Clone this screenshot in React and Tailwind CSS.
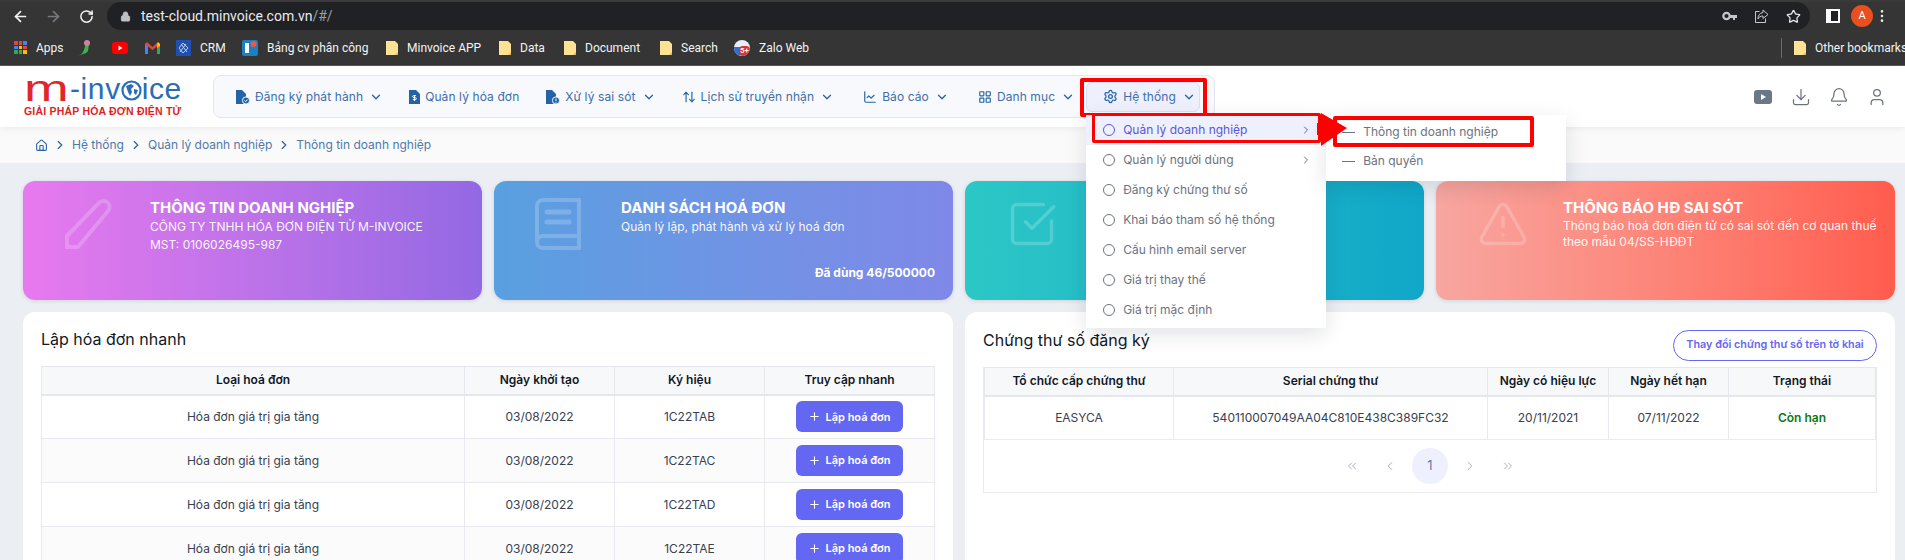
import {
  ArrowLeft,
  ArrowRight,
  ArrowUpDown,
  Bell,
  ChartLine,
  ChevronDown,
  ChevronLeft,
  ChevronRight,
  ChevronsLeft,
  ChevronsRight,
  Download,
  EllipsisVertical,
  House,
  LayoutGrid,
  Lock,
  Plus,
  RotateCw,
  Settings,
  SquareCheckBig,
  Star,
  TriangleAlert,
  User,
} from "lucide-react";

const DocIcon = ({ badge }) => (
  <svg width={badge === "dollar" ? 11 : 15} height="16" viewBox={badge === "dollar" ? "0 0 11 16" : "0 0 15 16"} className="shrink-0">
    <path d={badge === "dollar" ? "M0 1h7l4 4v10H0z" : "M1 1h6l4 4v10H1z"} fill="#2563a8" />
    {badge === "check" && <circle cx="11" cy="11.5" r="3.6" fill="#2563a8" stroke="#f8f9fc" />}
    {badge === "check" && <path d="M9.4 11.5l1.2 1.2 2-2.2" stroke="#fff" fill="none" />}
    {badge === "info" && <circle cx="11" cy="11.5" r="3.6" fill="#2563a8" stroke="#f8f9fc" />}
    {badge === "info" && <path d="M11 9.6v2.4M11 12.8v.9" stroke="#fff" fill="none" />}
    {badge === "dollar" && <path d="M5.500 6v6M3.900 10.600h2.400a1 1 0 000-2H4.700a1 1 0 010-2h2.200" stroke="#fff" fill="none" />}
  </svg>
);

const Folder = () => (
  <svg width="12" height="14" viewBox="0 0 12 14" className="shrink-0">
    <path d="M0 0h9l3 3v11H0z" fill="#fde293" />
    <path d="M9 14l3-3v3z" fill="#e9b949" />
  </svg>
);

function Bookmark({ icon, label, className = "" }) {
  return (
    <div className={`flex shrink-0 items-center gap-[9px] whitespace-nowrap ${className}`}>
      {icon}
      {label && <span>{label}</span>}
    </div>
  );
}

function ChromeBar() {
  return (
    <div className="bg-[#353535] font-['Roboto',sans-serif] text-white">
      <div className="flex h-[30px] items-end border-t-2 border-[#3a3a3a]">
        <div className="flex h-[28px] w-[107px] items-center pl-[12px]">
          <ArrowLeft size={17} strokeWidth={2.4} className="text-[#f1f3f4]" />
          <ArrowRight size={17} strokeWidth={2.4} className="ml-[16px] text-[#77797c]" />
          <RotateCw size={15} strokeWidth={2.4} className="ml-[17px] text-[#f1f3f4]" />
        </div>
        <div className="flex h-[28px] w-[1703px] items-center rounded-full bg-[#202124] pl-[13px] pr-[9px]">
          <Lock size={11} className="fill-[#bdc1c6] text-[#bdc1c6]" />
          <span className="ml-[10px] text-[14px] text-[#e8eaed]">
            test-cloud.minvoice.com.vn<span className="text-[#9aa0a6]">/#/</span>
          </span>
          <svg width="15" height="10" viewBox="0 0 15 10" className="ml-auto">
            <circle cx="4.500" cy="5" r="3.200" fill="none" stroke="#c4c7ca" strokeWidth="2.200" />
            <path d="M7 4h8v3h-2v2h-2V7H7z" fill="#c4c7ca" />
          </svg>
          <svg width="15" height="15" viewBox="0 0 15 15" fill="none" stroke="#c4c7ca" className="ml-[17px]">
            <path d="M5.500 2.500H1.500v11h10v-4" />
            <path d="M9 1l5 4.500L9 9.500V7C6.500 7 5 8 4 10c0-3.500 1.500-6 5-6.500z" />
          </svg>
          <Star size={15} className="ml-[17px] text-[#e8eaed]" />
        </div>
        <div className="flex h-[28px] flex-1 items-center pl-[16px]">
          <div className="h-[14px] w-[14px] shrink-0 border-2 border-white border-l-[5px] bg-[#202124]" />
          <div className="ml-[11px] flex h-[22px] w-[22px] shrink-0 items-center justify-center rounded-full bg-[#e8501e] text-[11px]">A</div>
          <EllipsisVertical size={16} className="ml-[1px] shrink-0 text-[#e8eaed]" />
        </div>
      </div>
      <div className="flex h-[36px] items-center overflow-hidden border-b border-[#5a5a5a] pl-[14px] text-[12px] text-[#f1f3f4]">
        <Bookmark
          label="Apps"
          className="w-[50px]"
          icon={
            <span className="grid h-[13px] w-[13px] shrink-0 grid-cols-3 gap-[1px]">
              {["bg-[#ea4335]", "bg-[#ea4335]", "bg-[#4285f4]", "bg-[#4285f4]", "bg-[#fbbc04]", "bg-[#ea4335]", "bg-[#34a853]", "bg-[#34a853]", "bg-[#fbbc04]"].map((c, i) => (
                <span key={i} className={c} />
              ))}
            </span>
          }
        />
        <svg width="16" height="18" viewBox="0 0 16 18" className="ml-[13px] shrink-0">
          <path d="M1 17c3-1 5-3 6-6l2-7 3 1-1 7c-1 2-4 3-5 3z" fill="#3cb64a" />
          <circle cx="10" cy="4" r="3" fill="#c9869b" />
        </svg>
        <svg width="16" height="12" viewBox="0 0 16 12" className="ml-[19px] shrink-0">
          <rect width="16" height="12" rx="3" fill="#f00" />
          <path d="M6.500 3.500l4 2.500-4 2.500z" fill="#fff" />
        </svg>
        <svg width="15" height="12" viewBox="0 0 15 12" className="ml-[17px] shrink-0">
          <path d="M0 12V1.500L3 2v10z" fill="#4285f4" />
          <path d="M12 12V2l3-.5V12z" fill="#34a853" />
          <path d="M0 2l2-2 5.500 5L13 0l2 2-7.500 6z" fill="#ea4335" />
          <path d="M13 0l2 2v2l-3 2V2z" fill="#fbbc04" />
        </svg>
        <Bookmark
          className="ml-[16px] w-[49px]"
          label="CRM"
          icon={
            <svg width="15" height="16" viewBox="0 0 15 16" className="shrink-0">
              <rect width="15" height="16" fill="#1f4fb0" />
              <path d="M3 8l4-5 5 5-5 5zM5 4l6 8M10 4l-6 8" stroke="#b9d0f5" fill="none" />
            </svg>
          }
        />
        <Bookmark
          className="ml-[17px] w-[125px]"
          label="Bảng cv phân công"
          icon={
            <svg width="16" height="16" viewBox="0 0 16 16" className="shrink-0">
              <rect width="16" height="16" rx="2" fill="#1b7fc4" />
              <rect x="3" y="3" width="4" height="10" fill="#fff" />
              <circle cx="11.500" cy="4" r="3" fill="#ea5a47" />
            </svg>
          }
        />
        <Bookmark className="ml-[19px] w-[94px]" label="Minvoice APP" icon={<Folder />} />
        <Bookmark className="ml-[19px] w-[46px]" label="Data" icon={<Folder />} />
        <Bookmark className="ml-[19px] w-[76px]" label="Document" icon={<Folder />} />
        <Bookmark className="ml-[20px] w-[57px]" label="Search" icon={<Folder />} />
        <Bookmark
          className="ml-[17px]"
          label="Zalo Web"
          icon={
            <span className="relative h-[16px] w-[16px] shrink-0 overflow-hidden rounded-full bg-[#e8eef8]">
              <span className="absolute bottom-0 left-0 h-[9px] w-[6px] bg-[#2f6fd0]" />
              <span className="absolute bottom-0 right-0 flex h-[10px] w-[11px] items-center justify-center rounded-sm bg-[#d9342b] text-[8px] font-bold leading-none">5+</span>
            </span>
          }
        />
        <div className="ml-auto h-[20px] w-px shrink-0 bg-[#6b6b6b]" />
        <Bookmark className="ml-[12px] w-[111px]" label="Other bookmarks" icon={<Folder />} />
      </div>
    </div>
  );
}

function Logo() {
  return (
    <div className="w-[213px] pl-[24px] font-['Liberation_Sans',sans-serif]">
      <div className="flex h-[26px] items-end leading-none">
        <span className="inline-block w-[46px] origin-left scale-x-[1.45] text-[37px] leading-[26px] text-[#e0262b]">m</span>
        <span className="text-[30px] leading-[26px] tracking-[0.6px] text-[#2a6db5]">-inv</span>
        <svg width="21" height="21" viewBox="0 0 21 21" className="mb-[1px] shrink-0">
          <circle cx="10.500" cy="10.500" r="9" fill="#fff" stroke="#2a6db5" strokeWidth="2.200" />
          <path d="M5 6l5-2 3 2-3 3 1 3-2 4-2-4zM13 9l4 1-2 5-2-2z" fill="#2a6db5" />
        </svg>
        <span className="text-[30px] leading-[26px] tracking-[0.6px] text-[#2a6db5]">ice</span>
      </div>
      <div className="mt-[3px] whitespace-nowrap text-[10.500px] font-bold leading-[12px] tracking-[0.2px] text-[#dd1f26]">GIẢI PHÁP HÓA ĐƠN ĐIỆN TỬ</div>
    </div>
  );
}

const subItems = ["Thông tin doanh nghiệp", "Bản quyền"];
const menuItems = [
  "Quản lý doanh nghiệp",
  "Quản lý người dùng",
  "Đăng ký chứng thư số",
  "Khai báo tham số hệ thống",
  "Cấu hình email server",
  "Giá trị thay thế",
  "Giá trị mặc định",
];

function SystemMenu() {
  return (
    <div className="absolute left-[-1px] top-[32px] z-20 w-[240px] bg-white pb-[3px] shadow-[0_6px_20px_rgba(15,23,42,0.12)]">
      {menuItems.map((item, i) => (
        <div
          key={item}
          className={`flex h-[30px] items-center pl-[17px] pr-[14px] text-[12px] tracking-normal ${i === 0 ? "bg-[#eef1fd] text-[#5a55d6]" : "text-[#6b7280]"}`}
        >
          <span className={`h-[12px] w-[12px] shrink-0 rounded-full border ${i === 0 ? "border-[#5a55d6]" : "border-[#6b7280]"}`} />
          <span className="ml-[8px]">{item}</span>
          {i < 2 && <ChevronRight size={12} className="ml-auto" />}
        </div>
      ))}
      <div className="absolute left-full top-0 h-[66px] w-[240px] bg-white pt-[3px] shadow-[0_6px_20px_rgba(15,23,42,0.12)]">
        {subItems.map((item) => (
          <div key={item} className="flex h-[29px] items-center pl-[16px] text-[12px] tracking-normal text-[#6b7280]">
            <span className="h-px w-[13px] bg-[#6b7280]" />
            <span className="ml-[8px]">{item}</span>
          </div>
        ))}
      </div>

      {/* red marks drawn on the screenshot */}
      <div className="absolute left-[6px] top-[-2px] h-[30px] w-[229px] rounded-[2px] border-[3px] border-[#f00]" />
      <div className="absolute left-[247px] top-[1px] h-[31px] w-[201px] rounded-[2px] border-[4px] border-[#f00]" />
      <svg width="30" height="36" viewBox="0 0 30 36" className="absolute left-[231px] top-[-2px]">
        <path d="M4 0L30 15 4 33V22H0V10h4z" fill="#f00" />
      </svg>
    </div>
  );
}

const navItems = [
  { label: "Đăng ký phát hành", icon: <DocIcon badge="check" />, caret: true },
  { label: "Quản lý hóa đơn", icon: <DocIcon badge="dollar" /> },
  { label: "Xử lý sai sót", icon: <DocIcon badge="info" />, caret: true },
  { label: "Lịch sử truyền nhận", icon: <ArrowUpDown size={14} />, caret: true },
  { label: "Báo cáo", icon: <ChartLine size={14} />, caret: true, shift: "ml-[3px]" },
  { label: "Danh mục", icon: <LayoutGrid size={14} />, caret: true, shift: "ml-[3px]" },
];

function Header() {
  return (
    <header className="relative z-10 flex h-[61px] items-center bg-white shadow-[0_2px_6px_rgba(15,23,42,0.06)]">
      <Logo />
      <nav className="flex h-[43px] w-[1002px] items-center rounded-lg border border-[#e3e6ee] bg-[#f8f9fc] pl-[8px] text-[12px] tracking-[0.1px] text-[#3f6ea8]">
        {navItems.map((item) => (
          <div key={item.label} className={`flex items-center gap-[5px] px-[13px] ${item.shift || ""}`}>
            <span className="text-[#2563a8]">{item.icon}</span>
            <span className="whitespace-nowrap">{item.label}</span>
            {item.caret && <ChevronDown size={14} strokeWidth={2.2} className="ml-[1px] text-[#2563a8]" />}
          </div>
        ))}
        <div className="relative -ml-[2px] flex h-[30px] w-[114px] items-center gap-[5px] rounded-md border border-[#d9defa] bg-[#eef1fd] pl-[16px]">
          <Settings size={15} className="text-[#2563a8]" />
          <span className="whitespace-nowrap">Hệ thống</span>
          <ChevronDown size={14} strokeWidth={2.2} className="ml-[1px] text-[#2563a8]" />
          <div className="absolute left-[-7px] top-[-5px] h-[39px] w-[127px] rounded-[2px] border-4 border-[#f00]" />
          <SystemMenu />
        </div>
      </nav>
      <div className="ml-auto flex items-center gap-[18px] pr-[18px] text-[#6b7280]">
        <svg width="20" height="20" viewBox="0 0 20 20">
          <rect x="1" y="3" width="18" height="14" rx="3" fill="#6b7785" />
          <path d="M8 7l5 3-5 3z" fill="#fff" />
        </svg>
        <Download size={20} strokeWidth={1.5} />
        <Bell size={20} strokeWidth={1.5} />
        <User size={20} strokeWidth={1.5} />
      </div>
    </header>
  );
}

function Breadcrumb() {
  const parts = ["Hệ thống", "Quản lý doanh nghiệp", "Thông tin doanh nghiệp"];
  return (
    <div className="flex h-[36px] items-center gap-[5px] bg-[#fafafa] pl-[35px] text-[12px] text-[#4f78aa]">
      <House size={13} className="text-[#2563a8]" />
      {parts.map((p) => (
        <div key={p} className="flex items-center gap-[5px]">
          <ChevronRight size={14} className="text-[#2563a8]" />
          <span>{p}</span>
        </div>
      ))}
    </div>
  );
}

const PencilIcon = () => (
  <svg width="52" height="52" viewBox="0 0 52 52" fill="none" stroke="currentColor" strokeWidth="4">
    <path d="M3 38L35 5a6 6 0 019 0 6 6 0 010 8L14 49H3z" />
  </svg>
);

const BookIcon = () => (
  <svg width="46" height="52" viewBox="0 0 46 52" fill="none" stroke="currentColor" strokeWidth="4">
    <path d="M44 2H8a6 6 0 00-6 6v36a6 6 0 006 6h36zM2 44a6 6 0 016-6h36" />
    <path d="M12 14h22M12 24h22" strokeWidth="5" strokeLinecap="round" />
  </svg>
);

function InfoCard({ gradient, icon, title, children, footer }) {
  return (
    <div className={`relative h-[119px] overflow-hidden rounded-xl ${gradient} text-white shadow-[0_1px_4px_rgba(15,23,42,0.12)]`}>
      <div className="absolute left-[41px] top-[17px] text-white/20">{icon}</div>
      <div className="pl-[127px] pt-[17px]">
        <div className="text-[15px] font-bold leading-[20px]">{title}</div>
        <div className="text-[12px] leading-[18px] text-white/95">{children}</div>
      </div>
      {footer && <div className="absolute bottom-[18px] right-[18px] text-[12px] font-bold">{footer}</div>}
    </div>
  );
}

const invoiceRows = ["1C22TAB", "1C22TAC", "1C22TAD", "1C22TAE"];
const cellClass = "border border-[#e8eaef] text-center";
const headClass = "border border-[#e4e7ec] border-b-2 text-center font-semibold text-[#111827]";

function InvoiceTable() {
  return (
    <table className="w-[894px] table-fixed border-collapse text-[12px] text-[#374151]">
      <colgroup>
        <col className="w-[423px]" />
        <col className="w-[150px]" />
        <col className="w-[150px]" />
        <col />
      </colgroup>
      <thead>
        <tr className="h-[28px] bg-[#f7f8fa]">
          <th className={headClass}>Loại hoá đơn</th>
          <th className={headClass}>Ngày khởi tạo</th>
          <th className={headClass}>Ký hiệu</th>
          <th className={headClass}>Truy cập nhanh</th>
        </tr>
      </thead>
      <tbody>
        {invoiceRows.map((code, i) => (
          <tr key={code} className={`h-[44px] ${i % 2 === 1 ? "bg-[#fbfbfb]" : "bg-white"}`}>
            <td className={cellClass}>Hóa đơn giá trị gia tăng</td>
            <td className={cellClass}>03/08/2022</td>
            <td className={cellClass}>{code}</td>
            <td className={cellClass}>
              <button className="mx-auto flex h-[31px] w-[107px] items-center justify-center gap-[4px] rounded-md bg-[#6467f2] text-[11px] font-semibold text-white">
                <Plus size={13} />
                Lập hoá đơn
              </button>
            </td>
          </tr>
        ))}
      </tbody>
    </table>
  );
}

function CertTable() {
  return (
    <div className="border border-t-0 border-[#e8eaef]">
      <table className="w-full table-fixed border-collapse text-[12px] text-[#374151]">
        <colgroup>
          <col className="w-[189px]" />
          <col className="w-[314px]" />
          <col className="w-[121px]" />
          <col className="w-[120px]" />
          <col />
        </colgroup>
        <thead>
          <tr className="h-[28px] bg-[#f7f8fa]">
            <th className={headClass}>Tổ chức cấp chứng thư</th>
            <th className={headClass}>Serial chứng thư</th>
            <th className={headClass}>Ngày có hiệu lực</th>
            <th className={headClass}>Ngày hết hạn</th>
            <th className={headClass}>Trạng thái</th>
          </tr>
        </thead>
        <tbody>
          <tr className="h-[44px]">
            <td className={cellClass}>EASYCA</td>
            <td className={cellClass}>540110007049AA04C810E438C389FC32</td>
            <td className={cellClass}>20/11/2021</td>
            <td className={cellClass}>07/11/2022</td>
            <td className={`${cellClass} font-semibold text-[#0b7a12]`}>Còn hạn</td>
          </tr>
        </tbody>
      </table>
      <div className="flex h-[52px] items-center justify-center text-[#9ca3af]">
        <ChevronsLeft size={14} strokeWidth={1.5} />
        <ChevronLeft size={14} strokeWidth={1.5} className="ml-[24px]" />
        <span className="ml-[15px] flex h-[36px] w-[36px] items-center justify-center rounded-full bg-[#eef1fd] text-[13px] text-[#6b7aa8]">1</span>
        <ChevronRight size={14} strokeWidth={1.5} className="ml-[15px]" />
        <ChevronsRight size={14} strokeWidth={1.5} className="ml-[24px]" />
      </div>
    </div>
  );
}

export default function App() {
  return (
    <div className="h-[560px] w-[1905px] overflow-hidden bg-[#ebeef3] font-['Inter',sans-serif]">
      <ChromeBar />
      <Header />
      <Breadcrumb />
      <main className="pl-[23px] pr-[10px] pt-[18px]">
        <div className="grid grid-cols-4 gap-3">
          <InfoCard gradient="bg-gradient-to-r from-[#e879ee] to-[#9369e3]" icon={<PencilIcon />} title="THÔNG TIN DOANH NGHIỆP">
            <div>CÔNG TY TNHH HÓA ĐƠN ĐIỆN TỬ M-INVOICE</div>
            <div>MST: 0106026495-987</div>
          </InfoCard>
          <InfoCard
            gradient="bg-gradient-to-r from-[#58a0e0] to-[#7f88e8]"
            icon={<BookIcon />}
            title="DANH SÁCH HOÁ ĐƠN"
            footer="Đã dùng 46/500000"
          >
            Quản lý lập, phát hành và xử lý hoá đơn
          </InfoCard>
          <InfoCard gradient="bg-gradient-to-r from-[#2cc7c6] to-[#10a7c9]" icon={<SquareCheckBig size={52} strokeWidth={1.6} />} />
          <InfoCard gradient="bg-gradient-to-r from-[#f7a6a0] to-[#ff5c4d]" icon={<TriangleAlert size={52} strokeWidth={1.6} />} title="THÔNG BÁO HĐ SAI SÓT">
            <div className="pr-[14px] leading-[16px]">Thông báo hoá đơn điện tử có sai sót đến cơ quan thuế theo mẫu 04/SS-HĐĐT</div>
          </InfoCard>
        </div>
        <div className="mt-3 grid grid-cols-2 gap-3">
          <section className="h-[300px] rounded-t-xl bg-white px-[18px] pt-[17px]">
            <h2 className="text-[16px] leading-[20px] text-[#111827]">Lập hóa đơn nhanh</h2>
            <div className="mt-[17px]">
              <InvoiceTable />
            </div>
          </section>
          <section className="h-[300px] rounded-t-xl bg-white px-[18px] pt-[18px]">
            <div className="flex items-start justify-between">
              <h2 className="text-[16px] leading-[20px] text-[#111827]">Chứng thư số đăng ký</h2>
              <button className="h-[31px] w-[204px] rounded-full border border-[#6467f2] text-[10.800px] font-semibold text-[#6467f2]">Thay đổi chứng thư số trên tờ khai</button>
            </div>
            <div className="mt-[6px]">
              <CertTable />
            </div>
          </section>
        </div>
      </main>
    </div>
  );
}
